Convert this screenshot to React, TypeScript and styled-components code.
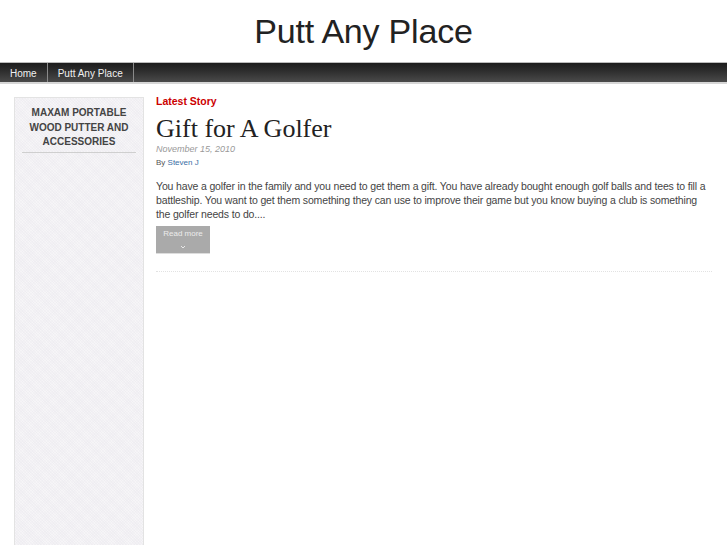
import styled, { createGlobalStyle } from "styled-components";

const GlobalStyle = createGlobalStyle`
  html, body {
    margin: 0;
    padding: 0;
    background: #fff;
    font-family: "Liberation Sans", Arial, sans-serif;
  }
`;

const navItems = ["Home", "Putt Any Place"];

export default function App() {
  return (
    <>
      <GlobalStyle />
      <Page>
        <Header>
          <SiteTitle>Putt Any Place</SiteTitle>
        </Header>
        <NavBar>
          {navItems.map((item) => (
            <NavItem key={item}>{item}</NavItem>
          ))}
        </NavBar>
        <Body>
          <Sidebar>
            <WidgetTitle>Maxam Portable Wood Putter and Accessories</WidgetTitle>
          </Sidebar>
          <Main>
            <SectionLabel>Latest Story</SectionLabel>
            <Article>
              <PostTitle>Gift for A Golfer</PostTitle>
              <PostDate>November 15, 2010</PostDate>
              <Byline>
                By <AuthorLink>Steven J</AuthorLink>
              </Byline>
              <Excerpt>
                You have a golfer in the family and you need to get them a gift. You have
                already bought enough golf balls and tees to fill a battleship. You want to
                get them something they can use to improve their game but you know buying a
                club is something the golfer needs to do....
              </Excerpt>
              <ReadMore>
                Read more
                <Chevron viewBox="0 0 6 4">
                  <path d="M1 1 L3 3 L5 1" fill="none" stroke="#e8e8e8" strokeWidth="1" />
                </Chevron>
              </ReadMore>
            </Article>
          </Main>
        </Body>
      </Page>
    </>
  );
}

const Page = styled.div`
  width: 727px;
  min-height: 545px;
  overflow: hidden;
`;

const Header = styled.header`
  display: flex;
  justify-content: center;
  align-items: center;
  height: 62px;
`;

const SiteTitle = styled.h1`
  margin: 0;
  font-size: 34px;
  font-weight: 400;
  letter-spacing: -0.2px;
  color: #222;
`;

const NavBar = styled.nav`
  display: flex;
  height: 19px;
  border-top: 1px solid #bbb;
  border-bottom: 2px solid #d6d6d6;
  background: linear-gradient(to bottom, #1c1c1c 0%, #2f2f2f 45%, #4a4a4a 100%);
`;

const NavItem = styled.a`
  display: flex;
  align-items: center;
  padding: 2px 10px 0;
  font-size: 10px;
  color: #f0f0f0;
  border-right: 1px solid #8a8a8a;
  cursor: pointer;
`;

const Body = styled.div`
  display: flex;
  align-items: flex-start;
  gap: 12px;
  padding: 10px 14px 0 14px;
`;

const Sidebar = styled.aside`
  box-sizing: border-box;
  flex: 0 0 130px;
  min-height: 460px;
  margin-top: 3px;
  padding: 8px 7px 0;
  border: 1px solid #e3e3e3;
  background-color: #f6f5f7;
  background-image: repeating-linear-gradient(
      45deg,
      rgba(232, 230, 236, 0.35) 0 1px,
      transparent 1px 2px
    ),
    repeating-linear-gradient(-45deg, rgba(236, 234, 240, 0.35) 0 1px, transparent 1px 2px);
`;

const WidgetTitle = styled.h3`
  margin: 0;
  padding-bottom: 2px;
  border-bottom: 1px solid #cfcfcf;
  font-size: 10px;
  line-height: 14.5px;
  font-weight: 700;
  text-transform: uppercase;
  text-align: center;
  color: #444;
`;

const Main = styled.main`
  flex: 1;
`;

const SectionLabel = styled.h2`
  margin: 0;
  font-size: 10.5px;
  line-height: 14px;
  font-weight: 700;
  color: #cc0000;
`;

const Article = styled.article`
  padding-bottom: 17px;
  border-bottom: 1px dotted #e2e2e2;
  margin-right: 1px;
`;

const PostTitle = styled.h2`
  margin: 6px 0 0;
  font-family: "Liberation Serif", "Times New Roman", serif;
  font-size: 26px;
  line-height: 30px;
  font-weight: 400;
  color: #222;
`;

const PostDate = styled.div`
  font-size: 9px;
  line-height: 11px;
  font-style: italic;
  color: #999;
`;

const Byline = styled.div`
  margin-top: 3px;
  font-size: 8px;
  line-height: 10px;
  color: #555;
`;

const AuthorLink = styled.a`
  color: #3a6ea5;
  cursor: pointer;
`;

const Excerpt = styled.p`
  margin: 11px 0 0;
  font-size: 10.5px;
  line-height: 14px;
  letter-spacing: -0.15px;
  color: #444;
`;

const ReadMore = styled.button`
  display: flex;
  flex-direction: column;
  align-items: center;
  margin-top: 5px;
  width: 54px;
  height: 28px;
  padding: 3px 0 0;
  border: none;
  border-bottom: 1px solid #ddd;
  background: #aaa;
  font-family: "Liberation Sans", Arial, sans-serif;
  font-size: 8px;
  line-height: 10px;
  color: #ececec;
  cursor: pointer;
`;

const Chevron = styled.svg`
  width: 6px;
  height: 4px;
  margin-top: 6px;
`;
